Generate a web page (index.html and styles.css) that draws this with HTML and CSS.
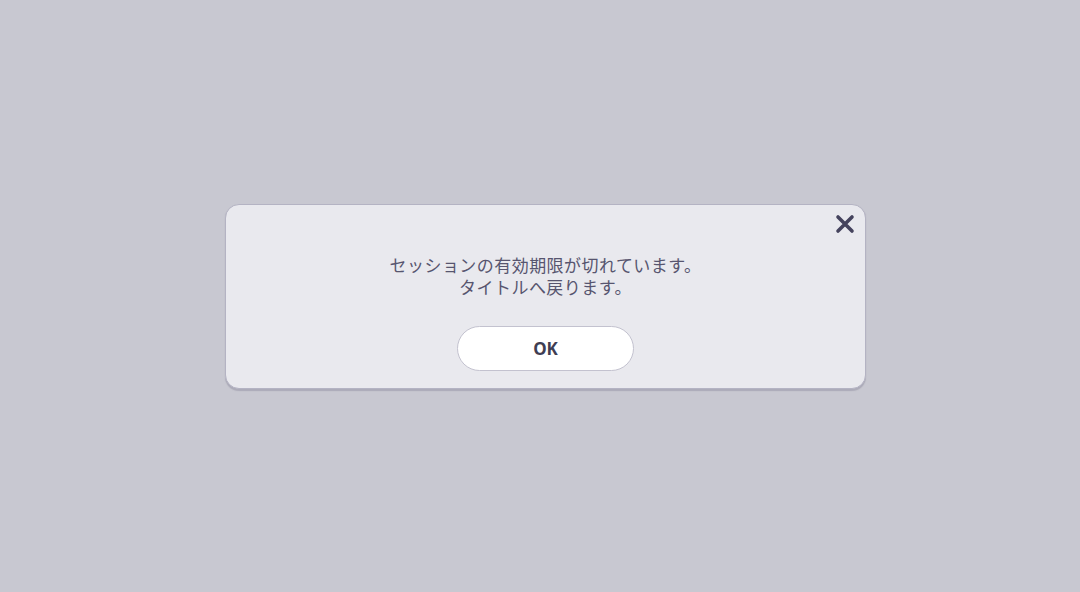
FILE: index.html
```html
<!DOCTYPE html>
<html lang="ja">
<head>
<meta charset="utf-8">
<link rel="stylesheet" href="styles.css">
</head>
<body>
<div class="stage">
  <div class="dialog">
    <button class="close" aria-label="閉じる">
      <svg width="20" height="20" viewBox="0 0 20 20"><path d="M3 3 L17 17 M17 3 L3 17" stroke="#45435d" stroke-width="3.6" stroke-linecap="round"/></svg>
    </button>
    <p class="msg"><span class="line">セッションの有効期限が切れています。</span><span class="line">タイトルへ戻ります。</span></p>
    <button class="ok">OK</button>
  </div>
</div>
</body>
</html>
```
FILE: styles.css
```css
html, body {
  margin: 0;
  padding: 0;
}
body {
  background: #c8c8d1;
  font-family: "Noto Sans CJK JP", "Noto Sans", sans-serif;
}
.stage {
  height: 592px;
  display: flex;
  align-items: center;
  justify-content: center;
  padding-left: 11px;
  box-sizing: border-box;
}
.dialog {
  position: relative;
  width: 641px;
  height: 185px;
  box-sizing: border-box;
  background: #e9e9ee;
  border: 1.5px solid #b4b3c3;
  border-radius: 14px;
  box-shadow: 0 1.5px 1px rgba(120, 118, 140, 0.35);
  display: flex;
  flex-direction: column;
  align-items: center;
  padding-top: 49px;
}
.close {
  position: absolute;
  top: 9px;
  right: 10px;
  width: 20px;
  height: 20px;
  padding: 0;
  border: 0;
  background: none;
  display: flex;
}
.msg {
  margin: 0;
  display: flex;
  flex-direction: column;
  align-items: center;
  font-size: 17px;
  font-weight: 400;
  color: #57556f;
  letter-spacing: 0.45px;
}
.line {
  display: block;
  line-height: 22px;
}
.ok {
  margin-top: 28px;
  width: 177px;
  height: 45px;
  background: #ffffff;
  border: 1.5px solid #c3c2cf;
  border-radius: 23px;
  font-family: "Noto Sans", sans-serif;
  font-weight: 700;
  font-size: 17px;
  color: #3f3e53;
  padding: 0;
}
```
